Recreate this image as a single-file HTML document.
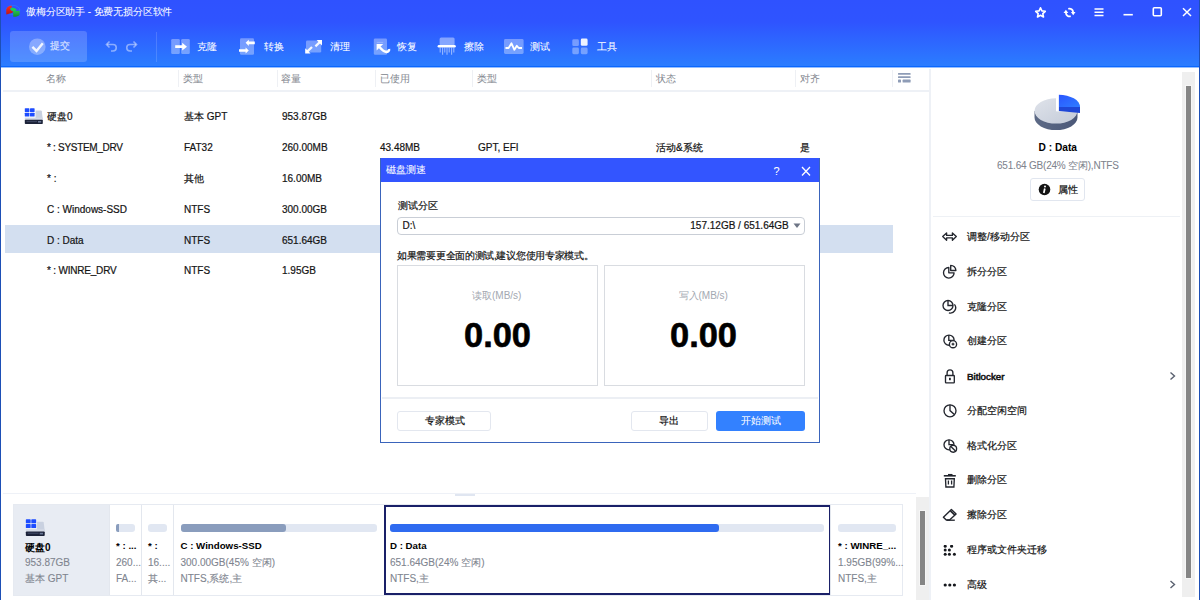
<!DOCTYPE html>
<html><head><meta charset="utf-8">
<style>
*{margin:0;padding:0;box-sizing:border-box}
html,body{width:1200px;height:600px;overflow:hidden;background:#fff;font-family:"Liberation Sans",sans-serif;color:#141414}
.a{position:absolute;white-space:nowrap}
#hdr{position:absolute;left:0;top:0;width:1200px;height:67px;background:linear-gradient(180deg,#2f52ff 0px,#2f54ff 22px,#2d6cff 48px,#2b7cff 65px);border-bottom:1px solid #0a68ff}
.t{font-size:10px;line-height:12px;-webkit-text-stroke:0.2px currentColor}
.w{color:#fff;-webkit-text-stroke:0.05px #fff !important}
.g{color:#878b93;-webkit-text-stroke:0.05px #878b93 !important}
.b{font-weight:bold;-webkit-text-stroke:0 !important}
.sep{position:absolute;width:1px;background:#eef0f4}
</style></head><body>
<div id="hdr"></div>
<div class="a" style="left:0;top:67px;width:1200px;height:1px;background:rgba(20,110,255,0.45)"></div>
<!-- left/right window border -->
<div class="a" style="left:0;top:0;width:1px;height:600px;background:#1d4fb6"></div>
<div class="a" style="left:1199px;top:0;width:1px;height:600px;background:#1d4fb6"></div>

<!-- title -->
<svg class="a" style="left:0;top:0" width="24" height="22" viewBox="0 0 24 22">
<defs><linearGradient id="lr" x1="0" y1="0" x2="0" y2="1"><stop offset="0" stop-color="#ff2a1e"/><stop offset="1" stop-color="#b81818"/></linearGradient>
<linearGradient id="lg" x1="0" y1="0" x2="0" y2="1"><stop offset="0" stop-color="#22c350"/><stop offset="1" stop-color="#178a30"/></linearGradient></defs>
<ellipse cx="13" cy="10" rx="6.8" ry="4.6" fill="none" stroke="#2b8cff" stroke-width="1" opacity="0.45"/>
<path d="M11.8 5.8 C8.5 5.8 6.2 7.8 6.2 10.5 L6.3 14.6 L12.6 12.8 L12.8 11 C11.2 10.8 10.2 10 10.3 8.6 L11.8 7.6 Z" fill="url(#lr)"/>
<path d="M10.3 8.6 C10.8 7.8 12.6 7.6 14.2 8.1 L16.6 9.3 L15.2 11.3 L13 11 C11.6 10.8 10.6 10 10.3 8.6 Z" fill="#1ad24c"/>
<path d="M13.1 11 L19.6 10.8 L19.6 14.8 C18.2 16.6 15.6 17 13.3 16.8 Z" fill="url(#lg)"/>
</svg>
<div class="a t w" style="left:26px;top:6px;letter-spacing:-0.15px">傲梅分区助手 - 免费无损分区软件</div>

<!-- window controls -->
<svg class="a" style="left:1030px;top:3px" width="170" height="20" viewBox="0 0 170 20" fill="none" stroke="#fff" stroke-width="1.5">
<path d="M10.5 4.8 L11.9 7.9 L15.3 8.3 L12.8 10.6 L13.5 14 L10.5 12.3 L7.5 14 L8.2 10.6 L5.7 8.3 L9.1 7.9 Z" stroke-linejoin="round" stroke-width="1.6"/>
<path d="M38.3 5.9 A3.6 3.6 0 0 1 43.1 9.3" stroke-width="1.8"/>
<path d="M40.7 13.1 A3.6 3.6 0 0 1 35.9 9.7" stroke-width="1.8"/>
<path d="M40.9 9 L45.5 9 L43.2 12.3 Z" fill="#fff" stroke="none"/>
<path d="M33.5 10 L38.3 10 L35.9 6.7 Z" fill="#fff" stroke="none"/>
<path d="M64.5 6 H73.5 M64.5 9.3 H73.5 M64.5 12.6 H73.5"/>
<path d="M93.5 11.7 H102.8" stroke-width="1.6"/>
<rect x="123.3" y="4.8" width="8" height="8" rx="1" stroke-width="1.6"/>
<path d="M153 5.3 L161 13 M161 5.3 L153 13"/>
</svg>

<!-- submit button -->
<div class="a" style="left:10px;top:31px;width:77px;height:31px;border-radius:3px;background:rgba(255,255,255,0.18)"></div>
<svg class="a" style="left:28px;top:38px" width="18" height="18" viewBox="0 0 18 18">
<circle cx="9.3" cy="8.7" r="8.3" fill="rgba(255,255,255,0.3)"/>
<path d="M4.4 8.9 L8.5 12.9 L14.8 5.2" fill="none" stroke="rgba(255,255,255,0.88)" stroke-width="2.4"/>
</svg>
<div class="a t" style="left:50px;top:40px;color:rgba(255,255,255,0.7)">提交</div>
<svg class="a" style="left:104px;top:40px" width="36" height="12" viewBox="0 0 36 12" fill="none" stroke="rgba(255,255,255,0.45)" stroke-width="1.6">
<path d="M3 4.5 H9 A3.2 3.2 0 0 1 9 11 H7"/><path d="M5.5 1.5 L2.5 4.5 L5.5 7.5"/>
<path d="M32 4.5 H26 A3.2 3.2 0 0 0 26 11 H28"/><path d="M29.5 1.5 L32.5 4.5 L29.5 7.5"/>
</svg>
<div class="a" style="left:156px;top:32px;width:1px;height:30px;background:rgba(255,255,255,0.15)"></div>


<!-- toolbar icons -->
<svg class="a" style="left:170px;top:37px" width="22" height="20" viewBox="0 0 22 20">
<rect x="1.2" y="2" width="8.6" height="15" rx="1.3" fill="rgba(255,255,255,0.35)"/>
<rect x="11.2" y="2" width="8.6" height="15" rx="1.3" fill="rgba(255,255,255,0.35)"/>
<path d="M5.2 8.3 H12.2 V5.8 L17 9.7 L12.2 13.6 V11 H5.2 Z" fill="#fff"/>
</svg>
<svg class="a" style="left:238px;top:37px" width="20" height="20" viewBox="0 0 20 20">
<rect x="2" y="1.2" width="14" height="16.6" rx="1.3" fill="rgba(255,255,255,0.35)"/>
<path d="M16.8 4.6 H10.8 V2.8 L7.6 5.8 L10.8 8.9 V7.2 H16.8 Z" fill="#fff"/>
<path d="M1 12.2 H7.6 V10.4 L10.8 13.4 L7.6 16.6 V14.7 H1 Z" fill="#fff"/>
</svg>
<svg class="a" style="left:304px;top:37px" width="20" height="20" viewBox="0 0 20 20">
<rect x="2" y="3.6" width="15.2" height="12" rx="1.3" fill="rgba(255,255,255,0.35)"/>
<path d="M12.6 3 H18 V8.4 Z" fill="#fff"/>
<path d="M1.2 16.6 V11.2 L6.6 16.6 Z" fill="#fff"/>
<path d="M15.8 5.2 L11.4 9.4 M3.4 14.4 L8 10" stroke="rgba(255,255,255,0.92)" stroke-width="2.3"/>
</svg>
<svg class="a" style="left:372px;top:37px" width="20" height="20" viewBox="0 0 20 20">
<rect x="1.8" y="1.4" width="13.2" height="16.4" rx="1.3" fill="rgba(255,255,255,0.35)"/>
<path d="M4.8 5.4 H11.2" stroke="rgba(255,255,255,0.25)" stroke-width="1"/>
<path d="M4.6 7.1 H11.2 L4.6 13.4 Z" fill="#fff"/>
<path d="M7.4 10 C9.4 12.2 11.4 14.4 13.8 14.8 C15.8 15.1 17.4 14 17 12" fill="none" stroke="#fff" stroke-width="2.6"/>
</svg>
<svg class="a" style="left:436px;top:36px" width="22" height="22" viewBox="0 0 22 22">
<rect x="3.6" y="1.6" width="15" height="8" rx="1.5" fill="rgba(255,255,255,0.42)"/>
<rect x="1.6" y="9" width="18.2" height="2.6" rx="1.3" fill="#fff"/>
<path d="M4.2 11.5 V16.5 M6.6 11.5 V18.8 M8.8 11.5 V16.5 M11 11.5 V18.8 M13.2 11.5 V16.5 M15.6 11.5 V18.8 M17.8 11.5 V16.5" stroke="rgba(255,255,255,0.5)" stroke-width="1.1"/>

</svg>
<svg class="a" style="left:502px;top:37px" width="24" height="20" viewBox="0 0 24 20">
<rect x="2" y="2" width="19.6" height="15" rx="1.4" fill="rgba(255,255,255,0.35)"/>
<path d="M3.5 11 H6.6 L9.5 6.3 L12.4 12.8 L14.8 8.8 L16.8 11 H20" fill="none" stroke="#fff" stroke-width="1.8" stroke-linejoin="round"/>
</svg>
<svg class="a" style="left:571px;top:37px" width="20" height="20" viewBox="0 0 20 20">
<rect x="1.3" y="2.3" width="6.6" height="6.8" rx="1.4" fill="rgba(255,255,255,0.35)"/>
<rect x="9.8" y="1.6" width="6.8" height="7.2" rx="1.4" fill="rgba(255,255,255,0.92)"/>
<rect x="1.3" y="10.6" width="6.6" height="6.6" rx="1.4" fill="rgba(255,255,255,0.35)"/>
<rect x="9.8" y="10.6" width="6.8" height="6.6" rx="1.4" fill="rgba(255,255,255,0.35)"/>
</svg>

<!-- toolbar texts -->
<div class="a t w" style="left:197px;top:41px">克隆</div>
<div class="a t w" style="left:264px;top:41px">转换</div>
<div class="a t w" style="left:330px;top:41px">清理</div>
<div class="a t w" style="left:397px;top:41px">恢复</div>
<div class="a t w" style="left:464px;top:41px">擦除</div>
<div class="a t w" style="left:530px;top:41px">测试</div>
<div class="a t w" style="left:597px;top:41px">工具</div>

<!-- column header -->
<div class="a t g" style="left:46px;top:73px">名称</div>
<div class="a t g" style="left:183px;top:73px">类型</div>
<div class="a t g" style="left:281px;top:73px">容量</div>
<div class="a t g" style="left:380px;top:73px">已使用</div>
<div class="a t g" style="left:477px;top:73px">类型</div>
<div class="a t g" style="left:656px;top:73px">状态</div>
<div class="a t g" style="left:800px;top:73px">对齐</div>
<div class="sep" style="left:178px;top:70px;height:17px"></div>
<div class="sep" style="left:277px;top:70px;height:17px"></div>
<div class="sep" style="left:375px;top:70px;height:17px"></div>
<div class="sep" style="left:472px;top:70px;height:17px"></div>
<div class="sep" style="left:651px;top:70px;height:17px"></div>
<div class="sep" style="left:795px;top:70px;height:17px"></div>
<div class="sep" style="left:892px;top:70px;height:17px"></div>
<svg class="a" style="left:897px;top:72px" width="16" height="13" viewBox="0 0 16 13" fill="#8e9cb6">
<rect x="1" y="1.1" width="12.6" height="1.7" rx="0.5"/>
<rect x="1" y="4.3" width="12.6" height="1.7" rx="0.5"/>
<rect x="1" y="7.6" width="3" height="3" rx="0.6"/>
<rect x="5.6" y="7.6" width="8" height="3" rx="0.6"/>
</svg>
<div class="a" style="left:3px;top:90px;width:926px;height:2px;background:#eef1f6"></div>

<!-- highlight row -->
<div class="a" style="left:5px;top:224.5px;width:888px;height:28.5px;background:#d3dff0"></div>


<!-- disk icons -->
<svg class="a" style="left:24px;top:107px" width="20" height="18" viewBox="0 0 20 18">
<path d="M11.5 3.5 H17 Q17.6 3.5 17.8 4.2 L18.8 12.5 H11.5 Z" fill="#c9d1e0"/>
<rect x="0.8" y="10.6" width="18" height="2.4" fill="#d3d9e5"/>
<rect x="0.8" y="12.8" width="18" height="4.2" rx="0.8" fill="#1c2238"/>
<rect x="2.5" y="13.9" width="10.5" height="1.2" fill="#3a435e"/>
<rect x="14" y="14" width="3.2" height="1.6" fill="#6a7896"/>
<rect x="0.8" y="1.2" width="4.6" height="3.8" rx="0.6" fill="#1d4cff"/>
<rect x="6" y="1.2" width="4.6" height="3.8" rx="0.6" fill="#1d4cff"/>
<rect x="0.8" y="5.7" width="4.6" height="3.8" rx="0.6" fill="#1d4cff"/>
<rect x="6" y="5.7" width="4.6" height="3.8" rx="0.6" fill="#1d4cff"/>
</svg>


<!-- rows -->
<div class="a t" style="left:47px;top:111px">硬盘0</div>
<div class="a t" style="left:184px;top:111px">基本 GPT</div>
<div class="a t" style="left:282px;top:111px">953.87GB</div>

<div class="a t" style="left:47px;top:142px;letter-spacing:-0.3px">* : SYSTEM_DRV</div>
<div class="a t" style="left:184px;top:142px">FAT32</div>
<div class="a t" style="left:282px;top:142px">260.00MB</div>
<div class="a t" style="left:380px;top:142px">43.48MB</div>
<div class="a t" style="left:478px;top:142px">GPT, EFI</div>
<div class="a t" style="left:656px;top:142px">活动&amp;系统</div>
<div class="a t" style="left:800px;top:142px">是</div>

<div class="a t" style="left:47px;top:173px">* :</div>
<div class="a t" style="left:184px;top:173px">其他</div>
<div class="a t" style="left:282px;top:173px">16.00MB</div>

<div class="a t" style="left:47px;top:204px">C : Windows-SSD</div>
<div class="a t" style="left:184px;top:204px">NTFS</div>
<div class="a t" style="left:282px;top:204px">300.00GB</div>

<div class="a t" style="left:47px;top:235px">D : Data</div>
<div class="a t" style="left:184px;top:235px">NTFS</div>
<div class="a t" style="left:282px;top:235px">651.64GB</div>

<div class="a t" style="left:47px;top:265px;letter-spacing:-0.2px">* : WINRE_DRV</div>
<div class="a t" style="left:184px;top:265px">NTFS</div>
<div class="a t" style="left:282px;top:265px">1.95GB</div>

<!-- right panel border -->
<div class="a" style="left:929px;top:69px;width:1.5px;height:531px;background:#eef1f6"></div>



<!-- right panel -->
<svg class="a" style="left:1030px;top:92px" width="56" height="40" viewBox="0 0 56 40">
<defs>
<linearGradient id="pg1" x1="0" y1="0" x2="1" y2="1"><stop offset="0" stop-color="#dfe3ea"/><stop offset="1" stop-color="#c3cad8"/></linearGradient>
<linearGradient id="pg2" x1="0" y1="0" x2="1" y2="0"><stop offset="0" stop-color="#5d6a86"/><stop offset="1" stop-color="#4b5878"/></linearGradient>
<linearGradient id="pg3" x1="0" y1="0" x2="1" y2="1"><stop offset="0" stop-color="#2a55ff"/><stop offset="1" stop-color="#2f7dff"/></linearGradient>
</defs>
<path d="M4.5 18.9 V25.4 A21.5 12.7 0 0 0 47.5 25.4 V18.9 Z" fill="url(#pg2)"/>
<path d="M26 18.9 V6.2 A21.5 12.7 0 1 0 47.5 18.9 Z" fill="url(#pg1)"/>
<path d="M26.3 19.4 H47.4" stroke="#e4e8ee" stroke-width="1.1"/>
<path d="M28.9 15 H50 V20.9 L28.9 18.9 Z" fill="#1f47d6"/>
<path d="M28.9 15 V2.8 A21.1 12.2 0 0 1 50 15 Z" fill="url(#pg3)"/>
</svg>
<div class="a b" style="left:1038.5px;top:142px;font-size:10.2px;line-height:12px;color:#000">D : Data</div>
<div class="a t g" style="left:997px;top:160px;color:#7d828c;letter-spacing:-0.2px">651.64 GB(24% 空闲),NTFS</div>
<div class="a" style="left:1030px;top:178px;width:55px;height:23px;border:1px solid #e1e6ef;border-radius:3px;background:#fff"></div>
<svg class="a" style="left:1038px;top:183px" width="13" height="13" viewBox="0 0 13 13"><circle cx="6.5" cy="6.5" r="5.8" fill="#141414"/><circle cx="7" cy="3.6" r="1" fill="#fff"/><path d="M6.8 5.5 L5.8 10" stroke="#fff" stroke-width="1.7"/></svg>
<div class="a t" style="left:1058px;top:184px">属性</div>
<div class="a" style="left:933px;top:215.5px;width:247px;height:1px;background:#eef1f5"></div>

<svg class="a" style="left:936px;top:225px" width="30" height="375" viewBox="0 0 30 375" fill="none" stroke="#23262e" stroke-width="1.35">
<path d="M6.7 11.6 L10.6 7.9 V10.4 H16.4 V7.9 L20.3 11.6 L16.4 15.3 V12.8 H10.6 V15.3 Z" stroke-linejoin="round"/>
<path d="M12.8 42.5 V47.8 H18.1 A5.3 5.3 0 1 1 12.8 42.5 Z" stroke-linejoin="round"/>
<path d="M14.7 45.5 V40.3 A5.3 5.3 0 0 1 19.9 45.5 Z" stroke-linejoin="round"/>
<circle cx="12" cy="80.5" r="5"/>
<path d="M12 75.5 V80.5 H17"/>
<path d="M18.4 79.4 A5.3 5.3 0 0 1 12.9 87.9"/>
<circle cx="13" cy="115.2" r="5.1"/>
<path d="M12.8 110.1 V115.3 H18.1"/>
<circle cx="17" cy="119.2" r="3.6" fill="#fff"/>
<path d="M15.6 119.2 H18.4 M17 117.8 V120.6" stroke-width="1.2"/>
<rect x="9.5" y="150.5" width="8.8" height="7.4" rx="0.6"/>
<path d="M11.1 150.5 V147.8 A2.9 2.9 0 0 1 16.9 147.8 V150.5"/>
<rect x="13" y="152.8" width="1.8" height="2.4" fill="#23262e" stroke="none"/>
<circle cx="14" cy="185.8" r="6"/>
<path d="M14 179.8 V185.6 L18.4 189.5"/>
<circle cx="13" cy="219.8" r="5"/>
<path d="M13 214.8 V219.6 H17.5"/>
<circle cx="17.2" cy="223.8" r="3.4" fill="#fff"/>
<path d="M14.9 221.5 L19.5 226.1"/>
<path d="M7.8 250.8 H19.8" stroke-width="1.6"/>
<path d="M12 249.6 H16.5" stroke-width="1.3"/>
<path d="M9.5 253.7 H18.3 L17.9 262 H9.9 Z"/>
<path d="M12.4 255.4 V259.6 M15.6 255.4 V259.6" stroke-width="1.3"/>
<path d="M7.4 292.2 L15.4 284.5 L20.1 289 L13.5 295 H10.3 Z" stroke-linejoin="round" stroke-width="1.4"/>
<path d="M10.8 295.2 H18.8"/>
<path d="M14.4 285.9 L18.9 290.2" stroke-width="1.6"/>
</svg>
<svg class="a" style="left:942px;top:545px" width="16" height="44" viewBox="0 0 16 44" fill="#15171c">
<circle cx="3.2" cy="1.2" r="1.5"/><circle cx="9.6" cy="1.2" r="1.5"/>
<circle cx="3.2" cy="5" r="1.5"/><circle cx="7.4" cy="5" r="1.5"/>
<circle cx="3.2" cy="9.2" r="1.5"/><circle cx="7.4" cy="9.2" r="1.5"/><circle cx="12.4" cy="9.2" r="1.5"/>
<circle cx="3.2" cy="40" r="1.6"/><circle cx="7.8" cy="40" r="1.6"/><circle cx="12.4" cy="40" r="1.6"/>
</svg>
<div class="a t" style="left:967px;top:231px">调整/移动分区</div>
<div class="a t" style="left:967px;top:266px">拆分分区</div>
<div class="a t" style="left:967px;top:301px">克隆分区</div>
<div class="a t" style="left:967px;top:335px">创建分区</div>
<div class="a t" style="left:967px;top:370.5px;font-size:9.8px;-webkit-text-stroke:0.55px #141414">Bitlocker</div>
<div class="a t" style="left:967px;top:405px">分配空闲空间</div>
<div class="a t" style="left:967px;top:440px">格式化分区</div>
<div class="a t" style="left:967px;top:474px">删除分区</div>
<div class="a t" style="left:967px;top:509px">擦除分区</div>
<div class="a t" style="left:967px;top:544px">程序或文件夹迁移</div>
<div class="a t" style="left:967px;top:579px">高级</div>
<svg class="a" style="left:1168px;top:370px" width="10" height="220" viewBox="0 0 10 220" fill="none" stroke="#5a6170" stroke-width="1.4">
<path d="M2.5 2.5 L6.5 6 L2.5 9.5"/><path d="M2.5 211 L6.5 214.5 L2.5 218"/>
</svg>
<!-- right scrollbar -->
<div class="a" style="left:1182px;top:72px;width:13px;height:525px;background:#efefef"></div>
<div class="a" style="left:1185px;top:84.5px;width:7px;height:494px;background:#858585;border:1px solid #f6f6f6"></div>

<!-- bottom splitter -->
<div class="a" style="left:3px;top:493px;width:913px;height:1px;background:#eef1f7"></div>
<div class="a" style="left:455px;top:494px;width:20px;height:2px;background:#e0e6f1"></div>
<!-- bottom disk map -->
<div class="a" style="left:13px;top:504px;width:890px;height:92px;border:1px solid #e6eaf1;background:#fff"></div>
<div class="a" style="left:14px;top:505px;width:95px;height:90px;background:#e8ecf3"></div>
<div class="a" style="left:109px;top:505px;width:1px;height:90px;background:#e3e7ee"></div>
<div class="a" style="left:141px;top:505px;width:1px;height:90px;background:#e3e7ee"></div>
<div class="a" style="left:173px;top:505px;width:1px;height:90px;background:#e3e7ee"></div>
<div class="a" style="left:384px;top:505px;width:447px;height:89.5px;border:2px solid #1a2068"></div>
<svg class="a" style="left:24.5px;top:518px" width="21" height="19" viewBox="0 0 20 18">
<path d="M11.5 3.5 H17 Q17.6 3.5 17.8 4.2 L18.8 12.5 H11.5 Z" fill="#c9d1e0"/>
<rect x="0.8" y="10.6" width="18" height="2.4" fill="#d3d9e5"/>
<rect x="0.8" y="12.8" width="18" height="4.2" rx="0.8" fill="#1c2238"/>
<rect x="2.5" y="13.9" width="10.5" height="1.2" fill="#3a435e"/>
<rect x="14" y="14" width="3.2" height="1.6" fill="#6a7896"/>
<rect x="0.8" y="1.2" width="4.6" height="3.8" rx="0.6" fill="#1d4cff"/>
<rect x="6" y="1.2" width="4.6" height="3.8" rx="0.6" fill="#1d4cff"/>
<rect x="0.8" y="5.7" width="4.6" height="3.8" rx="0.6" fill="#1d4cff"/>
<rect x="6" y="5.7" width="4.6" height="3.8" rx="0.6" fill="#1d4cff"/>
</svg>

<div class="a t b" style="left:25px;top:541.5px;color:#000">硬盘0</div>
<div class="a t" style="left:25px;top:557px;color:#80858f;-webkit-text-stroke:0.1px #80858f">953.87GB</div>
<div class="a t" style="left:25px;top:573px;color:#80858f;-webkit-text-stroke:0.1px #80858f">基本 GPT</div>

<div class="a" style="left:116px;top:523.5px;width:19px;height:8px;border-radius:3px;background:#e1e7f2"></div>
<div class="a" style="left:116px;top:523.5px;width:2.5px;height:8px;border-radius:2px 0 0 2px;background:#8a9dbd"></div>
<div class="a t b" style="left:116px;top:539.5px;font-size:9.7px;color:#000">* : ...</div>
<div class="a t" style="left:116px;top:557px;color:#80858f;-webkit-text-stroke:0.1px #80858f">260...</div>
<div class="a t" style="left:116px;top:573px;color:#80858f;-webkit-text-stroke:0.1px #80858f">FA...</div>

<div class="a" style="left:148px;top:523.5px;width:19px;height:8px;border-radius:3px;background:#e1e7f2"></div>
<div class="a t b" style="left:148px;top:539.5px;font-size:9.7px;color:#000">* :</div>
<div class="a t" style="left:148px;top:557px;color:#80858f;-webkit-text-stroke:0.1px #80858f">16....</div>
<div class="a t" style="left:148px;top:573px;color:#80858f;-webkit-text-stroke:0.1px #80858f">其...</div>

<div class="a" style="left:180.5px;top:523.5px;width:196px;height:8px;border-radius:3px;background:#e1e7f2"></div>
<div class="a" style="left:180.5px;top:523.5px;width:105px;height:8px;border-radius:3px;background:#8a9dbd"></div>
<div class="a t b" style="left:180.5px;top:539.5px;font-size:9.7px;color:#000">C : Windows-SSD</div>
<div class="a t" style="left:180.5px;top:557px;color:#80858f;-webkit-text-stroke:0.1px #80858f">300.00GB(45% 空闲)</div>
<div class="a t" style="left:180.5px;top:573px;color:#80858f;-webkit-text-stroke:0.1px #80858f">NTFS,系统,主</div>

<div class="a" style="left:390px;top:523.5px;width:434px;height:8px;border-radius:3px;background:#e1e7f2"></div>
<div class="a" style="left:390px;top:523.5px;width:329px;height:8px;border-radius:3px;background:#2f6bf0"></div>
<div class="a t b" style="left:390px;top:539.5px;font-size:9.7px;color:#000">D : Data</div>
<div class="a t" style="left:390px;top:557px;color:#80858f;-webkit-text-stroke:0.1px #80858f">651.64GB(24% 空闲)</div>
<div class="a t" style="left:390px;top:573px;color:#80858f;-webkit-text-stroke:0.1px #80858f">NTFS,主</div>

<div class="a" style="left:830px;top:505px;width:1px;height:90px;background:#e3e7ee"></div>
<div class="a" style="left:838px;top:523.5px;width:57.5px;height:8px;border-radius:3px;background:#e1e7f2"></div>
<div class="a t b" style="left:838px;top:539.5px;font-size:9.7px;color:#000">* : WINRE_...</div>
<div class="a t" style="left:838px;top:557px;color:#80858f;-webkit-text-stroke:0.1px #80858f">1.95GB(99%...</div>
<div class="a t" style="left:838px;top:573px;color:#80858f;-webkit-text-stroke:0.1px #80858f">NTFS,主</div>
<!-- bottom scrollbar -->
<div class="a" style="left:916px;top:497px;width:13px;height:103px;background:#efefef"></div>
<div class="a" style="left:919px;top:509.5px;width:7px;height:76.5px;background:#858585;border:1px solid #f6f6f6"></div>

<!-- dialog -->
<div class="a" style="left:380px;top:158px;width:440px;height:285px;background:#fff;border:1.5px solid #3a64bb"></div>
<div class="a" style="left:381px;top:158px;width:438px;height:24px;background:#3355ff"></div>
<div class="a t w" style="left:386px;top:164px">磁盘测速</div>
<div class="a w" style="left:773.5px;top:163.5px;font-size:11px;line-height:14px;-webkit-text-stroke:0.35px #fff">?</div>
<svg class="a" style="left:800px;top:166px" width="12" height="11" viewBox="0 0 12 11"><path d="M2 1 L10 9.5 M10 1 L2 9.5" stroke="#fff" stroke-width="1.3"/></svg>
<div class="a t" style="left:398px;top:200px">测试分区</div>
<div class="a" style="left:397px;top:217px;width:408px;height:18px;border:1px solid #c9ced6;border-radius:4px;background:#fff"></div>
<div class="a t" style="left:402.5px;top:220.3px">D:\</div>
<div class="a t" style="left:690.3px;top:220.3px">157.12GB / 651.64GB</div>
<svg class="a" style="left:793px;top:223px" width="8" height="6" viewBox="0 0 8 6"><path d="M0.5 0.5 H7.5 L4 5 Z" fill="#6d7585"/></svg>
<div class="a t" style="left:397px;top:250px;letter-spacing:-0.3px">如果需要更全面的测试,建议您使用专家模式。</div>
<div class="a" style="left:397px;top:265px;width:201px;height:121px;border:1px solid #d9dce1"></div>
<div class="a" style="left:604px;top:265px;width:201px;height:121px;border:1px solid #d9dce1"></div>
<div class="a t" style="left:472px;top:290px;color:#a3a8b1;-webkit-text-stroke:0">读取(MB/s)</div>
<div class="a t" style="left:678.5px;top:290px;color:#a3a8b1;-webkit-text-stroke:0">写入(MB/s)</div>
<div class="a b" style="left:464px;top:314.3px;font-size:35.5px;line-height:42px;color:#000;-webkit-text-stroke:0.6px #000 !important;transform:scaleX(0.97);transform-origin:0 0">0.00</div>
<div class="a b" style="left:670px;top:314.3px;font-size:35.5px;line-height:42px;color:#000;-webkit-text-stroke:0.6px #000 !important;transform:scaleX(0.97);transform-origin:0 0">0.00</div>
<div class="a" style="left:382px;top:397px;width:436px;height:1.5px;background:#eceff4"></div>
<div class="a" style="left:397px;top:411px;width:94px;height:20px;border:1px solid #e3e7ef;border-radius:3px;background:#fff"></div>
<div class="a t" style="left:425px;top:415px">专家模式</div>
<div class="a" style="left:631px;top:411px;width:77px;height:20px;border:1px solid #e3e7ef;border-radius:3px;background:#fff"></div>
<div class="a t" style="left:659px;top:415px">导出</div>
<div class="a" style="left:716px;top:411px;width:89px;height:20px;border-radius:3px;background:#3381ff"></div>
<div class="a t w" style="left:741px;top:415px">开始测试</div>

</body></html>
